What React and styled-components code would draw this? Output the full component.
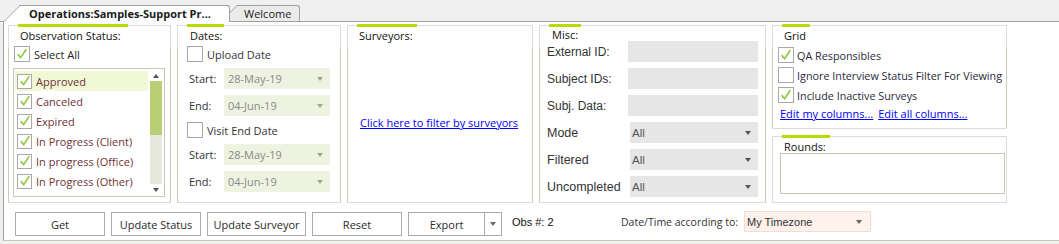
import React from 'react';
import styled, { createGlobalStyle } from 'styled-components';

const Global = createGlobalStyle`
  html, body { margin: 0; padding: 0; background: #fff; }
  body { font-family: "Open Sans", "Noto Sans", sans-serif; }
  * { box-sizing: border-box; }
`;

const UI = `"Open Sans", "Noto Sans", sans-serif`;
const ARIAL = `"Liberation Sans", Arial, sans-serif`;

const Page = styled.div`
  width: 1059px;
  height: 244px;
  overflow: hidden;
  background: #f0f0f0;
  display: flex;
  flex-direction: column;
  font-family: ${UI};
  font-size: 11px;
  color: #1e1e1e;
`;

const TabStrip = styled.div`
  flex: none;
  height: 22px;
  display: flex;
  align-items: flex-end;
  padding-left: 20px;
  border-bottom: 1px solid #a0a0a0;
`;

const Tab = styled.div`
  position: relative;
  z-index: ${p => (p.$active ? 2 : 1)};
  flex: none;
  width: ${p => p.$w}px;
  height: ${p => (p.$active ? 17 : 16)}px;
  margin-bottom: ${p => (p.$active ? -1 : 0)}px;
  margin-left: ${p => p.$ml || 0}px;
  padding-left: ${p => p.$pl}px;
  background: ${p => (p.$active ? '#ffffff' : '#ebebeb')};
  border-top: 1px solid #a0a0a0;
  border-right: 1px solid #a0a0a0;
  border-top-right-radius: 3px;
  font-weight: ${p => (p.$active ? 700 : 400)};
  color: #1a1a1a;
  line-height: 15px;
  white-space: nowrap;
  &::before {
    content: '';
    position: absolute;
    z-index: -1;
    left: -17px;
    top: -1px;
    bottom: 0;
    width: 24px;
    background: inherit;
    border-left: 1px solid #a0a0a0;
    border-top: 1px solid #a0a0a0;
    transform: skewX(-45deg);
    transform-origin: bottom left;
  }
`;

const Body = styled.div`
  flex: none;
  height: 219px;
  margin-left: 3px;
  background: #fff;
  border-left: 1px solid #a0a0a0;
  border-bottom: 1px solid #c6c6b6;
  padding: 3px 0 0 4px;
  display: flex;
  flex-direction: column;
`;

const PanelRow = styled.div`
  display: grid;
  grid-template-columns: 163px 164px 186px 227px 235px;
  column-gap: 6px;
  height: 178px;
`;

const Panel = styled.div`
  display: flex;
  flex-direction: column;
  background: #fff;
  height: ${p => (p.$h ? `${p.$h}px` : 'auto')};
  border: 1px solid #dcdcdc;
  border-image: ${p =>
    p.$plain
      ? 'none'
      : 'linear-gradient(to bottom, #dcdcdc 0, #dcdcdc 23px, #c9c9bc 23px, #c9c9bc calc(100% - 1px), #dcdcdc calc(100% - 1px)) 1'};
`;

const Stack = styled.div`
  display: flex;
  flex-direction: column;
  row-gap: 7px;
`;

const Accent = styled.div`
  flex: none;
  width: ${p => p.$w}px;
  height: 3px;
  margin: -2px 0 0 9px;
  background: #b4dc00;
`;

const Title = styled.div`
  margin: ${p => p.$mt ?? 2}px 0 0 ${p => p.$ml ?? 11}px;
  font-size: 11px;
  line-height: ${p => p.$lh ?? 14}px;
  color: #111;
`;

const CheckRow = styled.label`
  display: flex;
  align-items: center;
  gap: ${p => p.$gap ?? 4}px;
  height: 16px;
  margin: ${p => p.$m || 0};
  color: ${p => p.$color || '#222'};
  font-size: ${p => p.$fs || 11}px;
  white-space: nowrap;
`;

const Box = styled.span`
  flex: none;
  width: ${p => p.$s || 16}px;
  height: ${p => p.$s || 16}px;
  border: 1px solid #a8a8a8;
  background: #fff;
  display: flex;
  align-items: center;
  justify-content: center;
`;

const Check = ({ checked, size }) => (
  <Box $s={size}>
    {checked && (
      <svg width="12" height="12" viewBox="0 0 14 14">
        <path d="M2 7.2 L5.4 11.3 L12 1.5" fill="none" stroke="#93c846" strokeWidth="2" strokeLinejoin="miter" />
      </svg>
    )}
  </Box>
);

/* Observation list */
const ListBox = styled.div`
  margin: 6px 0 0 4px;
  width: 152px;
  height: 129px;
  border: 1px solid #c6c6b6;
  display: flex;
  overflow: hidden;
`;

const ListItems = styled.div`
  flex: 1;
  padding: 2px 0 0 1px;
  overflow: hidden;
`;

const ListItem = styled.div`
  display: flex;
  align-items: center;
  gap: 4px;
  height: 20px;
  width: 134px;
  padding-left: 2px;
  background: ${p => (p.$sel ? '#f1f8d6' : 'transparent')};
  color: #6e3232;
  font-size: 11px;
  white-space: nowrap;
`;

const ScrollBar = styled.div`
  flex: none;
  width: 12px;
  margin: 1px 2px 1px 2px;
  display: flex;
  flex-direction: column;
  align-items: stretch;
  background: #e5e8da;
`;

const ScrollArrow = styled.div`
  flex: none;
  height: 11px;
  display: flex;
  align-items: center;
  justify-content: center;
  background: #fff;
  &::after {
    content: '';
    border-left: 3px solid transparent;
    border-right: 3px solid transparent;
    ${p => (p.$up ? 'border-bottom: 4px solid #555;' : 'border-top: 4px solid #555;')}
  }
`;

const ScrollTrack = styled.div`
  flex: 1;
  display: flex;
  flex-direction: column;
`;

const Thumb = styled.div`
  height: 54px;
  background: #bacf73;
`;

/* Dates */
const DateGrid = styled.div`
  display: flex;
  flex-direction: column;
  row-gap: 6px;
  margin-top: 3px;
`;

const FieldRow = styled.div`
  display: flex;
  align-items: center;
  height: 21px;
  padding-left: ${p => p.$pl ?? 11}px;
`;

const FieldLabel = styled.span`
  width: ${p => p.$w}px;
  flex: none;
  color: #333;
  font-family: ${p => (p.$arial ? ARIAL : UI)};
  font-size: ${p => p.$fs || 11}px;
`;

const DropDown = styled.div`
  flex: none;
  display: flex;
  align-items: center;
  justify-content: space-between;
  width: ${p => p.$w}px;
  height: ${p => p.$h || 21}px;
  margin-left: ${p => p.$ml || 0}px;
  padding: 0 ${p => p.$pr ?? 7}px 0 ${p => p.$pl ?? 4}px;
  background: ${p => p.$bg};
  border: ${p => p.$border || 'none'};
  color: ${p => p.$color};
  font-family: ${p => (p.$arial ? ARIAL : UI)};
  font-size: ${p => p.$fs || 11}px;
  &::after {
    content: '';
    border-left: 3px solid transparent;
    border-right: 3px solid transparent;
    border-top: 4px solid ${p => p.$arrow};
  }
`;

const TextInput = styled.div`
  width: 130px;
  height: 21px;
  background: #e6e6e6;
`;

/* Surveyors */
const LinkArea = styled.div`
  flex: 1;
  display: flex;
  align-items: center;
  padding: 0 0 0 12px;
`;

const Link = styled.a`
  color: #0000ff;
  text-decoration: underline;
  font-size: 11px;
  cursor: pointer;
  white-space: nowrap;
`;

/* Misc */
const MiscGrid = styled.div`
  display: grid;
  grid-template-columns: 81px 130px;
  grid-auto-rows: 21px;
  row-gap: 6px;
  align-items: center;
  padding-left: 7px;
`;

/* Grid */
const GridChecks = styled.div`
  display: flex;
  flex-direction: column;
  row-gap: 4px;
  margin: 4px 0 0 5px;
`;

const LinkRow = styled.div`
  display: flex;
  gap: 5px;
  margin: 4px 0 0 7px;
  line-height: 14px;
`;

const RoundsBox = styled.div`
  margin: 0 0 0 7px;
  width: 225px;
  height: 41px;
  border: 1px solid #c6c6b6;
`;

/* Toolbar */
const Toolbar = styled.div`
  display: flex;
  align-items: flex-start;
  margin-top: 8px;
  padding-left: 7px;
`;

const Buttons = styled.div`
  display: flex;
  gap: 6px;
  margin-top: 1px;
`;

const Button = styled.div`
  width: ${p => p.$w}px;
  height: 24px;
  border: 1px solid #ababab;
  background: #fff;
  display: flex;
  align-items: center;
  justify-content: center;
  color: #2a2a2a;
`;

const SplitButton = styled.div`
  width: 94px;
  height: 24px;
  border: 1px solid #ababab;
  display: flex;
`;

const SplitMain = styled.div`
  flex: 1;
  display: flex;
  align-items: center;
  justify-content: center;
  color: #2a2a2a;
`;

const SplitArrow = styled.div`
  width: 17px;
  border-left: 1px solid #ababab;
  display: flex;
  align-items: center;
  justify-content: center;
  &::after {
    content: '';
    border-left: 3px solid transparent;
    border-right: 3px solid transparent;
    border-top: 4px solid #666;
  }
`;

const ObsText = styled.div`
  width: 109px;
  margin-left: 10px;
  height: 21px;
  display: flex;
  align-items: center;
  font-family: ${ARIAL};
  font-size: 11px;
  color: #111;
`;

const ToolLabel = styled.div`
  width: 123px;
  height: 21px;
  display: flex;
  align-items: center;
  color: #333;
  font-size: 10.5px;
`;

const items = [
  'Approved',
  'Canceled',
  'Expired',
  'In Progress (Client)',
  'In progress (Office)',
  'In Progress (Other)',
];

export default function App() {
  return (
    <>
      <Global />
      <Page>
        <TabStrip>
          <Tab $active $w={210} $pl={9}>Operations:Samples-Support Pr...</Tab>
          <Tab $w={62} $pl={6} $ml={8}>Welcome</Tab>
        </TabStrip>
        <Body>
          <PanelRow>
            <Panel>
              <Accent $w={110} />
              <Title>Observation Status:</Title>
              <CheckRow $m="3px 0 0 5px">
                <Check checked />
                Select All
              </CheckRow>
              <ListBox>
                <ListItems>
                  {items.map((t, i) => (
                    <ListItem key={t} $sel={i === 0}>
                      <Check checked size={15} />
                      {t}
                    </ListItem>
                  ))}
                </ListItems>
                <ScrollBar>
                  <ScrollArrow $up />
                  <ScrollTrack>
                    <Thumb />
                  </ScrollTrack>
                  <ScrollArrow />
                </ScrollBar>
              </ListBox>
            </Panel>

            <Panel>
              <Accent $w={37} />
              <Title $ml={12}>Dates:</Title>
              <DateGrid>
                <CheckRow $m="0 0 0 9px" $color="#333">
                  <Check />
                  Upload Date
                </CheckRow>
                <FieldRow>
                  <FieldLabel $w={35}>Start:</FieldLabel>
                  <DropDown $w={106} $bg="#eef3e1" $color="#8a8a8a" $arrow="#9aaa80">28-May-19</DropDown>
                </FieldRow>
                <FieldRow>
                  <FieldLabel $w={35}>End:</FieldLabel>
                  <DropDown $w={106} $bg="#eef3e1" $color="#8a8a8a" $arrow="#9aaa80">04-Jun-19</DropDown>
                </FieldRow>
                <CheckRow $m="0 0 0 9px" $color="#333">
                  <Check />
                  Visit End Date
                </CheckRow>
                <FieldRow>
                  <FieldLabel $w={35}>Start:</FieldLabel>
                  <DropDown $w={106} $bg="#eef3e1" $color="#8a8a8a" $arrow="#9aaa80">28-May-19</DropDown>
                </FieldRow>
                <FieldRow>
                  <FieldLabel $w={35}>End:</FieldLabel>
                  <DropDown $w={106} $bg="#eef3e1" $color="#8a8a8a" $arrow="#9aaa80">04-Jun-19</DropDown>
                </FieldRow>
              </DateGrid>
            </Panel>

            <Panel>
              <Accent $w={60} />
              <Title>Surveyors:</Title>
              <LinkArea>
                <Link>Click here to filter by surveyors</Link>
              </LinkArea>
            </Panel>

            <Panel>
              <Accent $w={32} />
              <Title $ml={12} $lh={12}>Misc:</Title>
              <MiscGrid>
                <FieldLabel $arial $fs={12}>External ID:</FieldLabel>
                <TextInput />
                <FieldLabel $arial $fs={12}>Subject IDs:</FieldLabel>
                <TextInput />
                <FieldLabel $arial $fs={12}>Subj. Data:</FieldLabel>
                <TextInput />
                <FieldLabel $arial $fs={12.5}>Mode</FieldLabel>
                <DropDown $w={128} $ml={2} $pl={2} $pr={7} $bg="#e6e6e6" $color="#555" $arrow="#555" $arial $fs={11.5}>All</DropDown>
                <FieldLabel $arial $fs={12.5}>Filtered</FieldLabel>
                <DropDown $w={128} $ml={2} $pl={2} $pr={7} $bg="#e6e6e6" $color="#555" $arrow="#555" $arial $fs={11.5}>All</DropDown>
                <FieldLabel $arial $fs={12.5}>Uncompleted</FieldLabel>
                <DropDown $w={128} $ml={2} $pl={2} $pr={7} $bg="#e6e6e6" $color="#555" $arrow="#555" $arial $fs={11.5}>All</DropDown>
              </MiscGrid>
            </Panel>

            <Stack>
              <Panel $h={104}>
                <Accent $w={28} />
                <Title>Grid</Title>
                <GridChecks>
                  <CheckRow $gap={3} $color="#2a2a3a" $fs={10.8}>
                    <Check checked />
                    QA Responsibles
                  </CheckRow>
                  <CheckRow $gap={3} $color="#2a2a3a" $fs={10.8}>
                    <Check />
                    Ignore Interview Status Filter For Viewing
                  </CheckRow>
                  <CheckRow $gap={3} $color="#2a2a3a" $fs={10.8}>
                    <Check checked />
                    Include Inactive Surveys
                  </CheckRow>
                </GridChecks>
                <LinkRow>
                  <Link>Edit my columns...</Link>
                  <Link>Edit all columns...</Link>
                </LinkRow>
              </Panel>
              <Panel $h={67} $plain>
                <Accent $w={48} />
                <Title $mt={3} $lh={12}>Rounds:</Title>
                <RoundsBox />
              </Panel>
            </Stack>
          </PanelRow>

          <Toolbar>
            <Buttons>
              <Button $w={90}>Get</Button>
              <Button $w={90}>Update Status</Button>
              <Button $w={99}>Update Surveyor</Button>
              <Button $w={90}>Reset</Button>
              <SplitButton>
                <SplitMain>Export</SplitMain>
                <SplitArrow />
              </SplitButton>
            </Buttons>
            <ObsText>Obs #: 2</ObsText>
            <ToolLabel>Date/Time according to:</ToolLabel>
            <DropDown $w={127} $bg="#fff1eb" $border="1px solid #f3dcd2" $color="#333" $arrow="#666" $pl={2} $pr={8} $arial $fs={11}>My Timezone</DropDown>
          </Toolbar>
        </Body>
      </Page>
    </>
  );
}
